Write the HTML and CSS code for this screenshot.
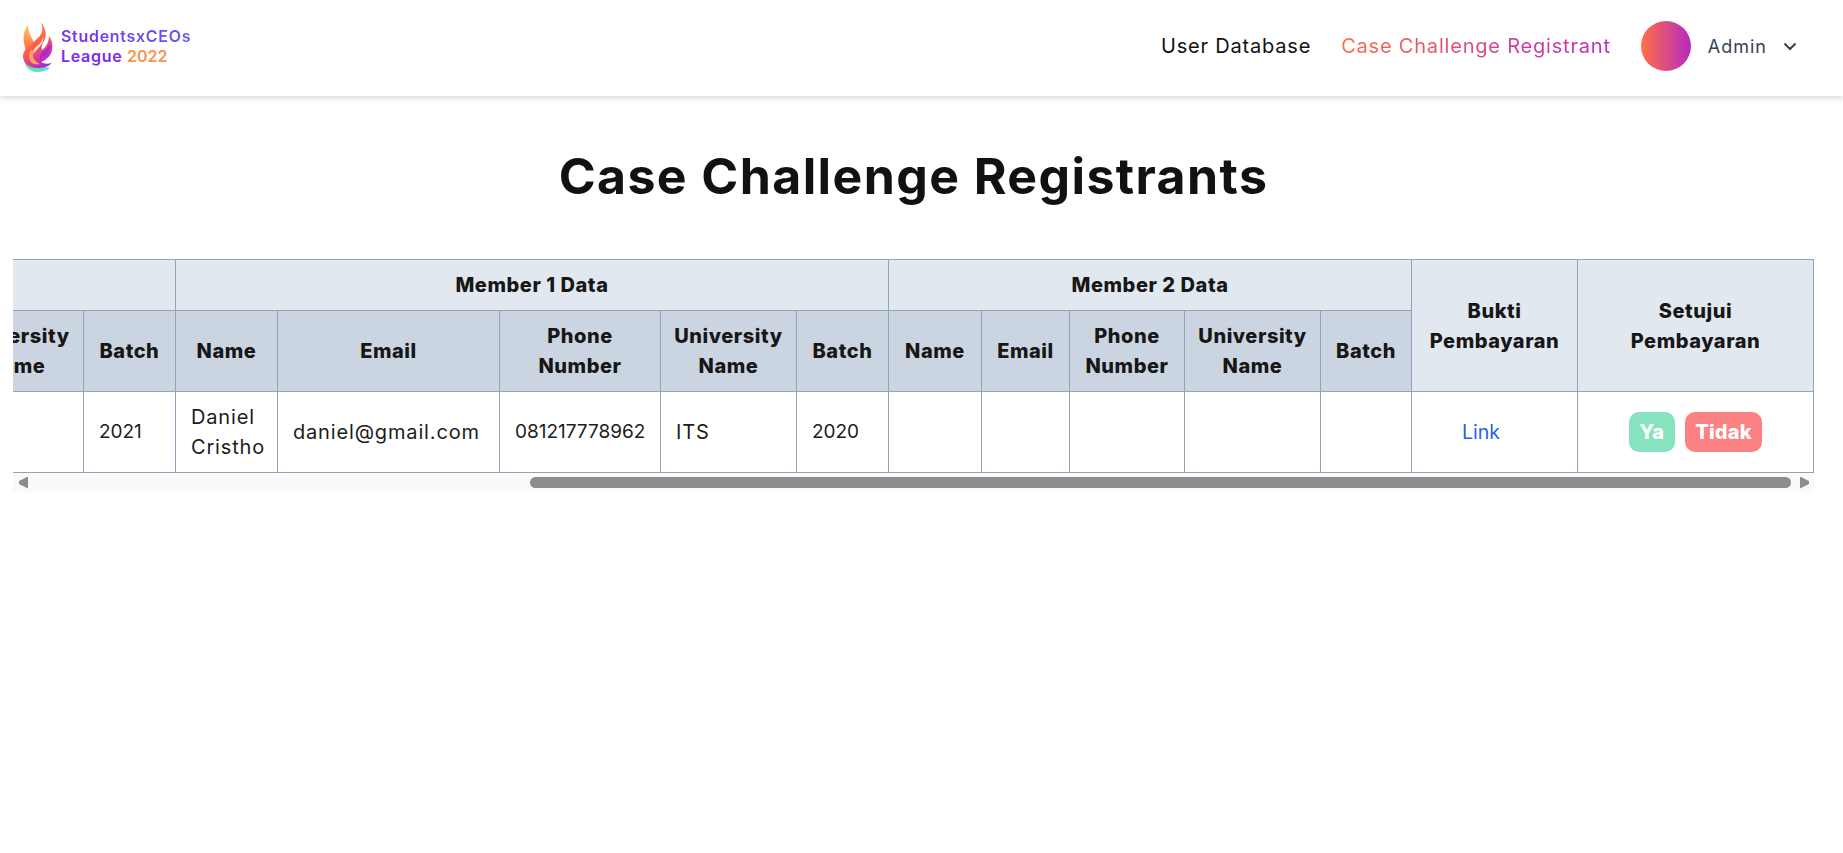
FILE: index.html
```html
<!DOCTYPE html>
<html lang="en">
<head>
<meta charset="utf-8">
<title>Case Challenge Registrants</title>
<link rel="stylesheet" href="styles.css">
</head>
<body>
<nav class="nav">
  <a class="brand" href="#">
    <svg class="flame" viewBox="0 0 30 50" width="30" height="50" aria-hidden="true">
      <defs>
        <linearGradient id="fBody" x1=".2" y1=".05" x2=".7" y2="1">
          <stop offset="0" stop-color="#ff9440"/><stop offset=".5" stop-color="#ff5a4a"/><stop offset=".82" stop-color="#c92eb8"/><stop offset="1" stop-color="#9a2cd8"/>
        </linearGradient>
        <linearGradient id="fTip" x1="0" y1="0" x2="0" y2="1">
          <stop offset="0" stop-color="#ffc46b"/><stop offset="1" stop-color="#ff6a3c"/>
        </linearGradient>
        <linearGradient id="fBase" x1="0" y1="0" x2="1" y2="0">
          <stop offset="0" stop-color="#5fe8a8"/><stop offset="1" stop-color="#62d8d0"/>
        </linearGradient>
      </defs>
      <path fill="url(#fBase)" d="M1 32C-.5 42 5 50 14 50c6 0 10-2 13-4L14 42 4 34z"/>
      <path fill="url(#fTip)" d="M5 3C1 8 0 14 1 21l2 9 8-9C9 15 5 11 5 3z"/>
      <path fill="url(#fBody)" d="M18 0c2 6 2 10-2 15C9 22 0 27 0 34c0 7 6 12 14 12 6 0 11-1 15-5-4 1-8 1-11-1 5-2 10-6 11-12 1-5 0-10-3-14 0 6-3 11-7 14-1-2 0-6 2-9 3-5 2-12-3-19z"/>
      <path fill="#ffe9c4" d="M20 14c0 4-3 8-7 11-2 2-3 4-3 7 2-3 6-6 8-9 2-3 3-6 2-9z"/>
      <path fill="#ffa35c" d="M9 27c-4 4-4 10 0 14 2 1 5 2 8 1-4-2-7-5-7-8 0-2 0-5-1-7z"/>
      <path fill="#a02cd6" d="M19 30c3-1 6-4 8-8 0 5-2 10-7 13-2 1-3 3-2 5-2-3-1-7 1-10z"/>
    </svg>
    <span class="brand-text">
      <span class="brand-line brand-grad">StudentsxCEOs</span>
      <span class="brand-line brand-purple">League <span class="brand-year">2022</span></span>
    </span>
  </a>
  <div class="nav-right">
    <a class="nav-link" href="#">User Database</a>
    <a class="nav-link nav-active" href="#">Case Challenge Registrant</a>
    <div class="avatar"></div>
    <span class="admin">Admin</span>
    <svg class="chev" viewBox="0 0 14 9" width="14" height="9" aria-hidden="true"><path d="M1.5 1.5 7 7l5.5-5.5" fill="none" stroke="#374151" stroke-width="2"/></svg>
  </div>
</nav>

<main class="main">
  <h1 class="title">Case Challenge Registrants</h1>
  <div class="scroller">
    <div class="viewport">
      <table class="tbl">
        <colgroup>
          <col class="c136"><col class="c92"><col class="c102"><col class="c222"><col class="c161"><col class="c136"><col class="c92"><col class="c93"><col class="c88"><col class="c115"><col class="c136"><col class="c91"><col class="c166"><col class="c236">
        </colgroup>
        <thead>
          <tr class="r1">
            <th colspan="2"></th>
            <th colspan="5">Member 1 Data</th>
            <th colspan="5">Member 2 Data</th>
            <th rowspan="2">Bukti<br>Pembayaran</th>
            <th rowspan="2">Setujui<br>Pembayaran</th>
          </tr>
          <tr class="r2">
            <th class="dark">University<br>Name</th>
            <th class="dark">Batch</th>
            <th class="dark">Name</th>
            <th class="dark">Email</th>
            <th class="dark">Phone<br>Number</th>
            <th class="dark">University<br>Name</th>
            <th class="dark">Batch</th>
            <th class="dark">Name</th>
            <th class="dark">Email</th>
            <th class="dark">Phone<br>Number</th>
            <th class="dark">University<br>Name</th>
            <th class="dark">Batch</th>
          </tr>
        </thead>
        <tbody>
          <tr class="r3">
            <td></td>
            <td class="num">2021</td>
            <td>Daniel<br>Cristho</td>
            <td>daniel@gmail.com</td>
            <td class="num">081217778962</td>
            <td>ITS</td>
            <td class="num">2020</td>
            <td></td><td></td><td></td><td></td><td></td>
            <td class="link-cell"><a class="link" href="#">Link</a></td>
            <td class="act-cell">
              <div class="actions">
                <button class="btn btn-yes">Ya</button>
                <button class="btn btn-no">Tidak</button>
              </div>
            </td>
          </tr>
        </tbody>
      </table>
    </div>
    <div class="bar">
      <span class="arrow arrow-left"></span>
      <div class="track"><div class="thumb"></div></div>
      <span class="arrow arrow-right"></span>
    </div>
  </div>
</main>
</body>
</html>
```
FILE: styles.css
```css
* { box-sizing: border-box; }
html, body { margin: 0; padding: 0; height: 100%; overflow: hidden; background: #fff; }
body { font-family: Inter, "Liberation Sans", sans-serif; color: #111; }

.nav {
  height: 96px;
  display: flex;
  align-items: center;
  justify-content: space-between;
  padding: 0 46px 4px 23px;
  background: #fff;
  box-shadow: 0 2px 6px rgba(0,0,0,.16);
}
.brand { display: flex; align-items: center; gap: 8px; text-decoration: none; }
.flame { display: block; margin-top: 1px; }
.brand-text { display: flex; flex-direction: column; font-size: 16px; font-weight: 600; line-height: 20px; letter-spacing: .7px; }
.brand-line { display: block; }
.brand-grad { background: linear-gradient(90deg, #7a2cf0, #5f5cf0); -webkit-background-clip: text; background-clip: text; color: transparent; }
.brand-purple { color: #7a2cf0; }
.brand-year { color: #fb9350; letter-spacing: 0; }

.nav-right { display: flex; align-items: center; }
.nav-link { font-size: 20px; line-height: 28px; letter-spacing: .8px; color: #111; text-decoration: none; margin-right: 30px; }
.nav-active { background: linear-gradient(90deg, #ff6a45, #b92ac0); -webkit-background-clip: text; background-clip: text; color: transparent; margin-right: 30px; }
.avatar { width: 50px; height: 50px; border-radius: 50%; background: linear-gradient(90deg, #ff6f47, #b62abf); margin-right: 17px; }
.admin { font-size: 18px; letter-spacing: 1px; color: #374151; margin-right: 16px; }
.chev { display: block; }

.main { padding: 0 29px 0 13px; }
.title { margin: 48px 0 0; text-align: center; font-size: 50px; line-height: 64px; letter-spacing: 1.4px; font-weight: 700; color: #111; }

.scroller { margin-top: 51px; }
.viewport { display: flex; justify-content: flex-end; overflow: hidden; }
.tbl { border-collapse: collapse; table-layout: fixed; flex: none; width: 1854px; border-right: 1px solid #94a3b8; font-size: 20px; }
.c136 { width: 136px; } .c92 { width: 92px; } .c102 { width: 102px; } .c222 { width: 222px; }
.c161 { width: 161px; } .c93 { width: 93px; } .c88 { width: 88px; } .c115 { width: 115px; }
.c91 { width: 91px; } .c166 { width: 166px; } .c236 { width: 236px; }
.tbl th, .tbl td { border: 1px solid #94a3b8; padding: 0 15px; }
.tbl th { background: #e2e8f0; font-size: 20px; line-height: 30px; letter-spacing: .55px; font-weight: 800; text-align: center; color: #171717; white-space: nowrap; padding: 0; }
.tbl th.dark { background: #cbd5e1; }
.tbl td { font-size: 20px; line-height: 30px; letter-spacing: .85px; font-weight: 400; color: #1c1c1c; text-align: left; white-space: nowrap; }
.tbl td.num { font-size: 19px; letter-spacing: 0; }
.r1 { height: 51px; }
.r2 { height: 81px; }
.r3 { height: 81px; }
.tbl td.link-cell { padding-left: 50px; letter-spacing: 0; font-size: 19.5px; }
.tbl td.act-cell { padding: 0; }
.link { color: #2563eb; text-decoration: none; }
.actions { display: flex; justify-content: center; gap: 10px; }
.btn { height: 40px; border: 0; border-radius: 10px; padding: 0 10.5px; color: #fff; font: 800 20px/40px Inter, sans-serif; letter-spacing: .2px; }
.btn-yes { background: #86e3bd; }
.btn-no { background: #fb8282; }

.bar { height: 19px; display: flex; align-items: center; background: #fafafa; padding: 0 5px 0 6px; }
.track { flex: 1; height: 11px; padding-left: 500px; padding-right: 0; margin: 0 9px 0 2px; }
.thumb { height: 11px; border-radius: 6px; background: #8c8c8c; }
.arrow { width: 9px; height: 12px; flex: none; background: #8c8c8c; }
.arrow-left { clip-path: polygon(0 38%, 100% 0, 100% 100%, 0 62%); }
.arrow-right { clip-path: polygon(0 0, 100% 38%, 100% 62%, 0 100%); }
```
